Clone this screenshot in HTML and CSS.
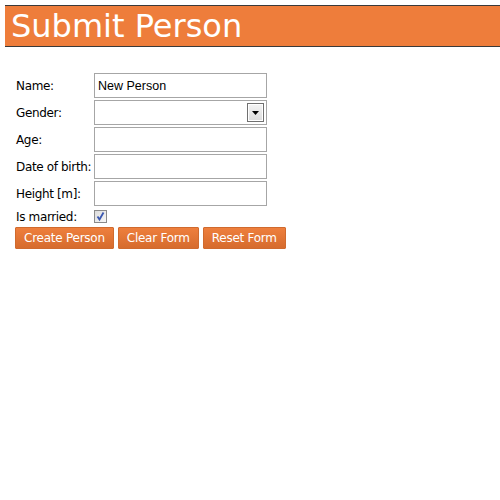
FILE: index.html
```html
<!DOCTYPE html>
<html>
<head>
<meta charset="utf-8">
<link rel="stylesheet" href="styles.css">
</head>
<body>
<h1 class="title">Submit Person</h1>
<form class="form">
  <div class="grid">
    <label class="lbl">Name:</label>
    <div class="field"><span class="val">New Person</span></div>
    <label class="lbl">Gender:</label>
    <div class="field select"><span class="drop"><svg width="7" height="4" viewBox="0 0 7 4"><path d="M0 0h7L3.5 4z" fill="#000"/></svg></span></div>
    <label class="lbl">Age:</label>
    <div class="field"></div>
    <label class="lbl">Date of birth:</label>
    <div class="field"></div>
    <label class="lbl">Height [m]:</label>
    <div class="field"></div>
    <label class="lbl check-lbl">Is married:</label>
    <div class="check-cell"><span class="check"><svg width="11" height="11" viewBox="0 0 11 11"><path d="M2.5 5.5l2 3 4-7" stroke="#3a57b0" stroke-width="1.8" fill="none"/></svg></span></div>
  </div>
  <div class="buttons">
    <button type="button" class="btn">Create Person</button>
    <button type="button" class="btn">Clear Form</button>
    <button type="button" class="btn">Reset Form</button>
  </div>
</form>
</body>
</html>
```
FILE: styles.css
```css
html, body { margin: 0; padding: 0; background: #fff; }
body { padding: 5px 0 0 5px; font-family: "DejaVu Sans", sans-serif; overflow: hidden; }
.title {
  margin: 0;
  border-top: 1px solid #3a3a3a;
  border-bottom: 1px solid #3a3a3a;
  background: #ee7d3b;
  color: #fff;
  font-weight: normal;
  font-size: 32px;
  line-height: 39px;
  padding: 1px 0 0 6px;
  height: 39px;
}
.form { margin: 26px 0 0 10px; }
.grid {
  display: grid;
  grid-template-columns: 79px 173px;
  row-gap: 2px;
}
.lbl {
  font-size: 12px;
  letter-spacing: -0.35px;
  color: #000;
  display: flex;
  align-items: center;
  padding-left: 1px;
}
.field {
  box-sizing: border-box;
  height: 25px;
  border: 1px solid #a6a6a6;
  display: flex;
  align-items: center;
  padding-left: 3px;
}
.val { font-family: "Liberation Sans", sans-serif; font-size: 12.5px; color: #000; }
.select { justify-content: flex-end; padding-right: 2px; }
.drop {
  box-sizing: border-box;
  width: 17px;
  height: 19px;
  border: 1px solid #707070;
  background: linear-gradient(#f4f4f4, #dcdcdc);
  box-shadow: inset 0 0 0 1px #fff;
  display: flex;
  align-items: center;
  justify-content: center;
}
.check-lbl { height: 17px; }
.check-cell { display: flex; align-items: center; }
.check {
  box-sizing: border-box;
  width: 13px; height: 13px;
  border: 1px solid #8a8a8a;
  background: linear-gradient(135deg, #dcdcdc, #f6f6f6);
  display: flex; align-items: center; justify-content: center;
}
.buttons { display: flex; gap: 4px; margin-top: 2px; }
.btn {
  height: 22px;
  border: 1px solid #d06a2e;
  border-radius: 1px;
  background: linear-gradient(#ee7f3d, #d66b2d);
  color: #fff;
  font-family: "DejaVu Sans", sans-serif;
  font-size: 12px;
  letter-spacing: -0.25px;
  padding: 0 8px;
  cursor: pointer;
}
```
